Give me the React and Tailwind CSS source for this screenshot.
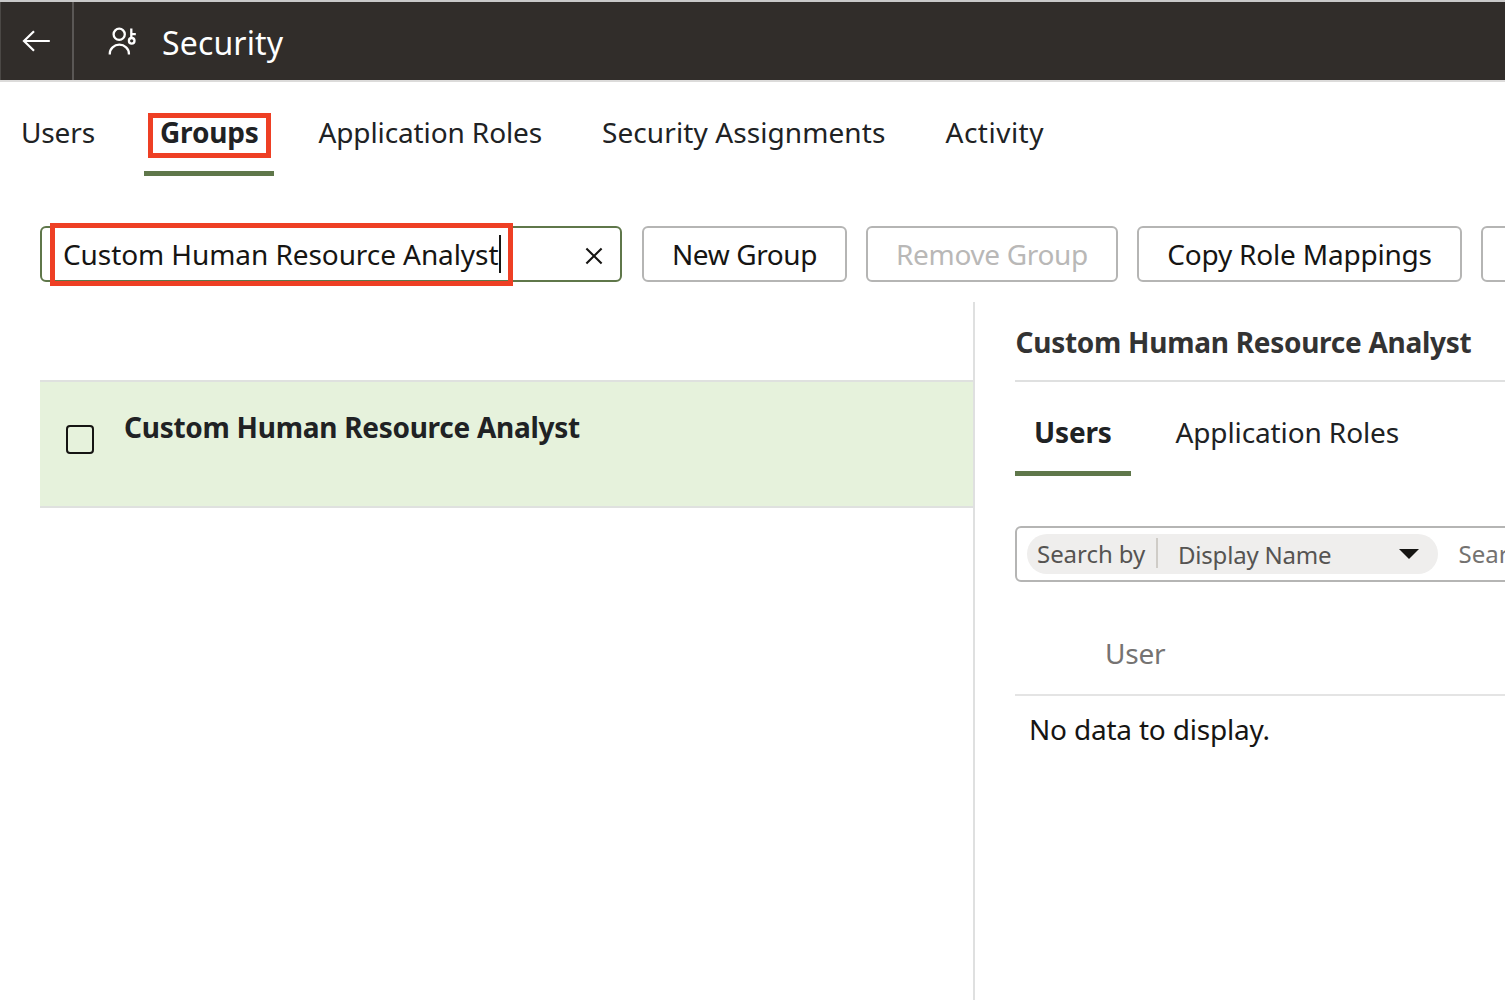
import React from "react";

function BackArrow() {
  return (
    <svg className="ml-5 h-6 w-[30px]" viewBox="0 0 30 24" fill="none" stroke="#fff" strokeWidth="2.2">
      <path d="M28.8 12H2.6M13 2.2L3 12l10 9.8" />
    </svg>
  );
}

function UserKeyIcon() {
  return (
    <svg className="ml-[33px] h-[30px] w-[30px]" viewBox="0 0 30 30" fill="none" stroke="#fff" strokeWidth="2.3">
      <circle cx="12.2" cy="8.3" r="5.6" />
      <path d="M2.8 28.4v-.9a9.55 8.8 0 0 1 19.1 0v.9" />
      <circle cx="24.7" cy="14.8" r="2.8" />
      <path d="M24.3 2.6v9.6M24.3 8.2h4.5" />
    </svg>
  );
}

function ClearIcon() {
  return (
    <svg className="mt-[3px] h-[18px] w-[18px]" viewBox="0 0 18 18" fill="none" stroke="#161513" strokeWidth="2.1">
      <path d="M1.4 1.4l15.2 15.2M16.6 1.4L1.4 16.6" />
    </svg>
  );
}

function Header() {
  return (
    <header className="flex h-[82px] shrink-0 items-stretch border-t-2 border-b-2 border-t-[#c9c9c9] border-b-[#dcdbda] bg-[#312d2a]">
      <button className="flex w-[74px] shrink-0 items-center border-r-2 border-l border-r-[#5a5755] border-l-[#4b4845]">
        <BackArrow />
      </button>
      <div className="flex items-center">
        <UserKeyIcon />
        <h1 className="mt-[3px] ml-[25px] text-[32px] leading-[40px] tracking-[0.15px] text-white">Security</h1>
      </div>
    </header>
  );
}

function MainTabs() {
  return (
    <nav className="flex h-[94px] shrink-0 items-stretch pl-[21px] text-[28px] leading-[40px] text-[#202224]">
      <span className="w-[123px] pt-[30px] tracking-[-0.15px]">Users</span>
      <div className="flex w-[130px] flex-col justify-between border-b-5 border-[#5f774a] pt-[31px]">
        <span className="ml-1 flex h-[45px] w-[123px] items-center border-5 border-[#ee3f24] pl-[7px] font-bold leading-[35px] tracking-[-0.15px]">
          <span className="-mt-[7px]">Groups</span>
        </span>
      </div>
      <span className="ml-[44.5px] w-[283.5px] pt-[30px] tracking-[-0.12px]">Application Roles</span>
      <span className="w-[343.5px] pt-[30px] tracking-[0.09px]">Security Assignments</span>
      <span className="pt-[30px] tracking-[0.5px]">Activity</span>
    </nav>
  );
}

const buttonBase = "flex h-14 shrink-0 items-center justify-center rounded-md border-2 border-[#b5b5b4] whitespace-nowrap pb-px";

function Toolbar() {
  return (
    <div className="mt-[50px] flex h-14 shrink-0 pl-10 text-[28px] leading-[40px] text-[#161513]">
      <div className="relative flex h-14 w-[582px] shrink-0 items-center justify-between rounded-md border-2 border-[#5f774a] pr-[17px] pl-[21px]">
        <span className="-mt-px flex items-center tracking-[-0.08px] whitespace-nowrap">
          Custom Human Resource Analyst
          <i className="ml-[0.5px] h-[38px] w-0.5 bg-[#161513]" />
        </span>
        <ClearIcon />
        <div className="absolute -top-[5px] left-2 h-[63px] w-[463px] border-5 border-[#ee3f24]" />
      </div>
      <button className={`${buttonBase} ml-5 w-[205px] tracking-[-0.4px]`}>New Group</button>
      <button className={`${buttonBase} ml-[19px] w-[252px] tracking-[-0.33px] text-[#b9b8b7]`}>Remove Group</button>
      <button className={`${buttonBase} ml-[19px] w-[325px] tracking-[-0.2px]`}>Copy Role Mappings</button>
      <button className={`${buttonBase} ml-[19px] w-[120px]`} aria-label="More" />
    </div>
  );
}

function GroupList() {
  return (
    <section className="w-[973px] shrink-0 pt-[78px] pl-10">
      <div className="flex h-32 border-y-2 border-[#dfe1df] bg-[#e6f2dc]">
        <span className="mt-[43px] ml-[26px] h-[29px] w-[28px] rounded-[4px] border-2 border-[#161513]" />
        <span className="mt-[25px] ml-[30px] text-[28px] leading-[40px] font-bold tracking-[-0.27px] text-[#202224]">
          Custom Human Resource Analyst
        </span>
      </div>
    </section>
  );
}

function DetailTabs() {
  return (
    <div className="flex h-[94px] text-[28px] leading-[40px] text-[#202224]">
      <span className="w-[116px] border-b-5 border-[#5f774a] pt-[30px] pl-[19px] font-bold tracking-[-0.15px]">Users</span>
      <span className="ml-[44.5px] pt-[30px] tracking-[-0.12px] whitespace-nowrap">Application Roles</span>
    </div>
  );
}

function SearchBar() {
  return (
    <div className="mt-[50px] flex h-14 w-[900px] items-center rounded-md border-2 border-[#b5b5b4] pl-2.5 text-[24px] leading-[36px]">
      <div className="flex h-10 w-[411px] shrink-0 items-center rounded-full bg-[#efeeed] pl-2.5 text-[#565452]">
        <span className="w-[119px] tracking-[-0.05px]">Search by</span>
        <i className="-mt-0.5 h-[30px] w-0.5 bg-[#cfccc7]" />
        <span className="mt-[2px] ml-5 w-[221px] tracking-[-0.2px]">Display Name</span>
        <svg className="h-2.5 w-5" viewBox="0 0 20 10">
          <path d="M0 0h20L10 10z" fill="#161513" />
        </svg>
      </div>
      <span className="ml-[20.5px] text-[#747270]">Search</span>
    </div>
  );
}

function Detail() {
  return (
    <section className="w-[532px] shrink-0 overflow-hidden border-l-2 border-[#dfe0e0] pl-10">
      <h2 className="h-20 border-b-2 border-[#dfe0e0] pt-[20px] pl-[0.5px] text-[28px] leading-[40px] font-bold tracking-[-0.27px] whitespace-nowrap text-[#333]">
        Custom Human Resource Analyst
      </h2>
      <DetailTabs />
      <SearchBar />
      <div className="mt-8 h-[82px] border-b-2 border-[#e4e4e4] pt-[19px] pl-[90px] text-[28px] leading-[40px] tracking-[-0.2px] text-[#757372]">
        User
      </div>
      <p className="pt-[13px] pl-[14px] text-[28px] leading-[40px] tracking-[-0.2px] text-[#161513]">No data to display.</p>
    </section>
  );
}

export default function App() {
  return (
    <div className="flex h-[1000px] w-[1505px] flex-col overflow-hidden bg-white font-['Noto_Sans',sans-serif]">
      <Header />
      <MainTabs />
      <Toolbar />
      <main className="mt-5 flex min-h-0 flex-1">
        <GroupList />
        <Detail />
      </main>
    </div>
  );
}
